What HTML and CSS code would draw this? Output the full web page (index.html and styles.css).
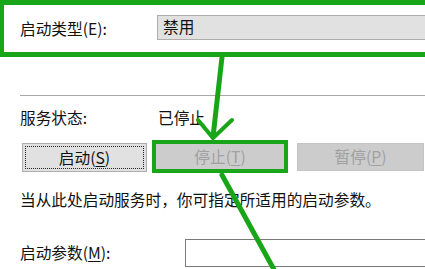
FILE: index.html
```html
<!DOCTYPE html>
<html lang="zh-CN">
<head>
<meta charset="utf-8">
<title>服务属性</title>
<link rel="stylesheet" href="styles.css">
</head>
<body>
<div class="page">
  <div class="startup-box">
    <span class="label">启动类型(E):</span>
    <div class="combo">禁用</div>
  </div>
  <div class="sep"></div>
  <div class="status-row">
    <span class="label">服务状态:</span>
    <span class="value">已停止</span>
  </div>
  <div class="buttons">
    <button class="btn btn-start">启动(<u>S</u>)</button>
    <button class="btn btn-disabled btn-marked">停止(<u>T</u>)</button>
    <button class="btn btn-disabled btn-pause">暂停(<u>P</u>)</button>
  </div>
  <p class="hint">当从此处启动服务时，你可指定所适用的启动参数。</p>
  <div class="param-row">
    <span class="label label-param">启动参数(<u>M</u>):</span>
    <div class="input"></div>
  </div>
  <svg class="arrows" width="425" height="269" viewBox="0 0 425 269">
    <g fill="none" stroke="#18a518" stroke-linecap="round" stroke-linejoin="round">
      <line x1="222" y1="57" x2="213" y2="137" stroke-width="5"/>
      <polyline points="198,120 213,138 232,120" stroke-width="4"/>
      <line x1="222" y1="175" x2="277" y2="275" stroke-width="5"/>
    </g>
  </svg>
</div>
</body>
</html>
```

FILE: styles.css
```css
html, body {
  margin: 0;
  padding: 0;
  background: #ffffff;
  overflow: hidden;
}

.page {
  position: relative;
  width: 425px;
  height: 269px;
  overflow: hidden;
  font-family: "Noto Sans CJK SC", "Noto Sans", sans-serif;
  font-size: 15.7px;
  line-height: 20px;
  color: #111111;
}

.startup-box {
  box-sizing: border-box;
  height: 57px;
  margin-right: -20px;
  border-top: 5px solid #18a518;
  border-bottom: 5px solid #18a518;
  border-left: 4px solid #18a518;
  display: flex;
  align-items: center;
  padding-left: 16px;
}

.label {
  width: 137px;
  flex: none;
}

.combo {
  box-sizing: border-box;
  flex: 1;
  height: 25px;
  margin-top: -2px;
  background: #e1e1e1;
  border-top: 1px solid #adadad;
  border-bottom: 1px solid #adadad;
  border-left: 1px solid #adadad;
  padding-left: 5px;
  line-height: 22px;
}

.sep {
  margin: 38px 0 0 20px;
  height: 1px;
  background: #a8a8a8;
}

.status-row {
  display: flex;
  margin: 12px 0 0 20px;
  height: 20px;
}

.value {
  padding-left: 1px;
}

.buttons {
  display: flex;
  align-items: center;
  height: 33px;
  margin: 12px 0 0 22px;
}

.btn {
  box-sizing: border-box;
  font: inherit;
  line-height: 20px;
  padding: 0;
  margin: 0;
  flex: none;
}

.btn u {
  text-underline-offset: 2px;
}

.btn-start {
  width: 125px;
  height: 29px;
  margin-top: 2px;
  background: #e1e1e1;
  border: 1px solid #adadad;
  color: #111111;
  outline: 1px dotted #222222;
  outline-offset: -4px;
}

.btn-disabled {
  background: #cccccc;
  color: #a0a0a0;
}

.btn-marked {
  width: 136px;
  height: 33px;
  margin-left: 5px;
  border: 4px solid #18a518;
}

.btn-pause {
  width: 127px;
  height: 28px;
  margin-left: 9px;
  margin-top: 1px;
  border: 1px solid #c4c4c4;
}

.hint {
  margin: 17px 0 0 20px;
  white-space: nowrap;
}

.param-row {
  display: flex;
  align-items: center;
  margin: 29px -20px 0 20px;
}

.label-param {
  width: 165px;
}

.label-param u {
  text-underline-offset: 2px;
}

.input {
  box-sizing: border-box;
  flex: 1;
  height: 28px;
  background: #ffffff;
  border-top: 1px solid #7a7a7a;
  border-bottom: 1px solid #7a7a7a;
  border-left: 1px solid #7a7a7a;
}

.arrows {
  position: absolute;
  left: 0;
  top: 0;
  pointer-events: none;
}
```
